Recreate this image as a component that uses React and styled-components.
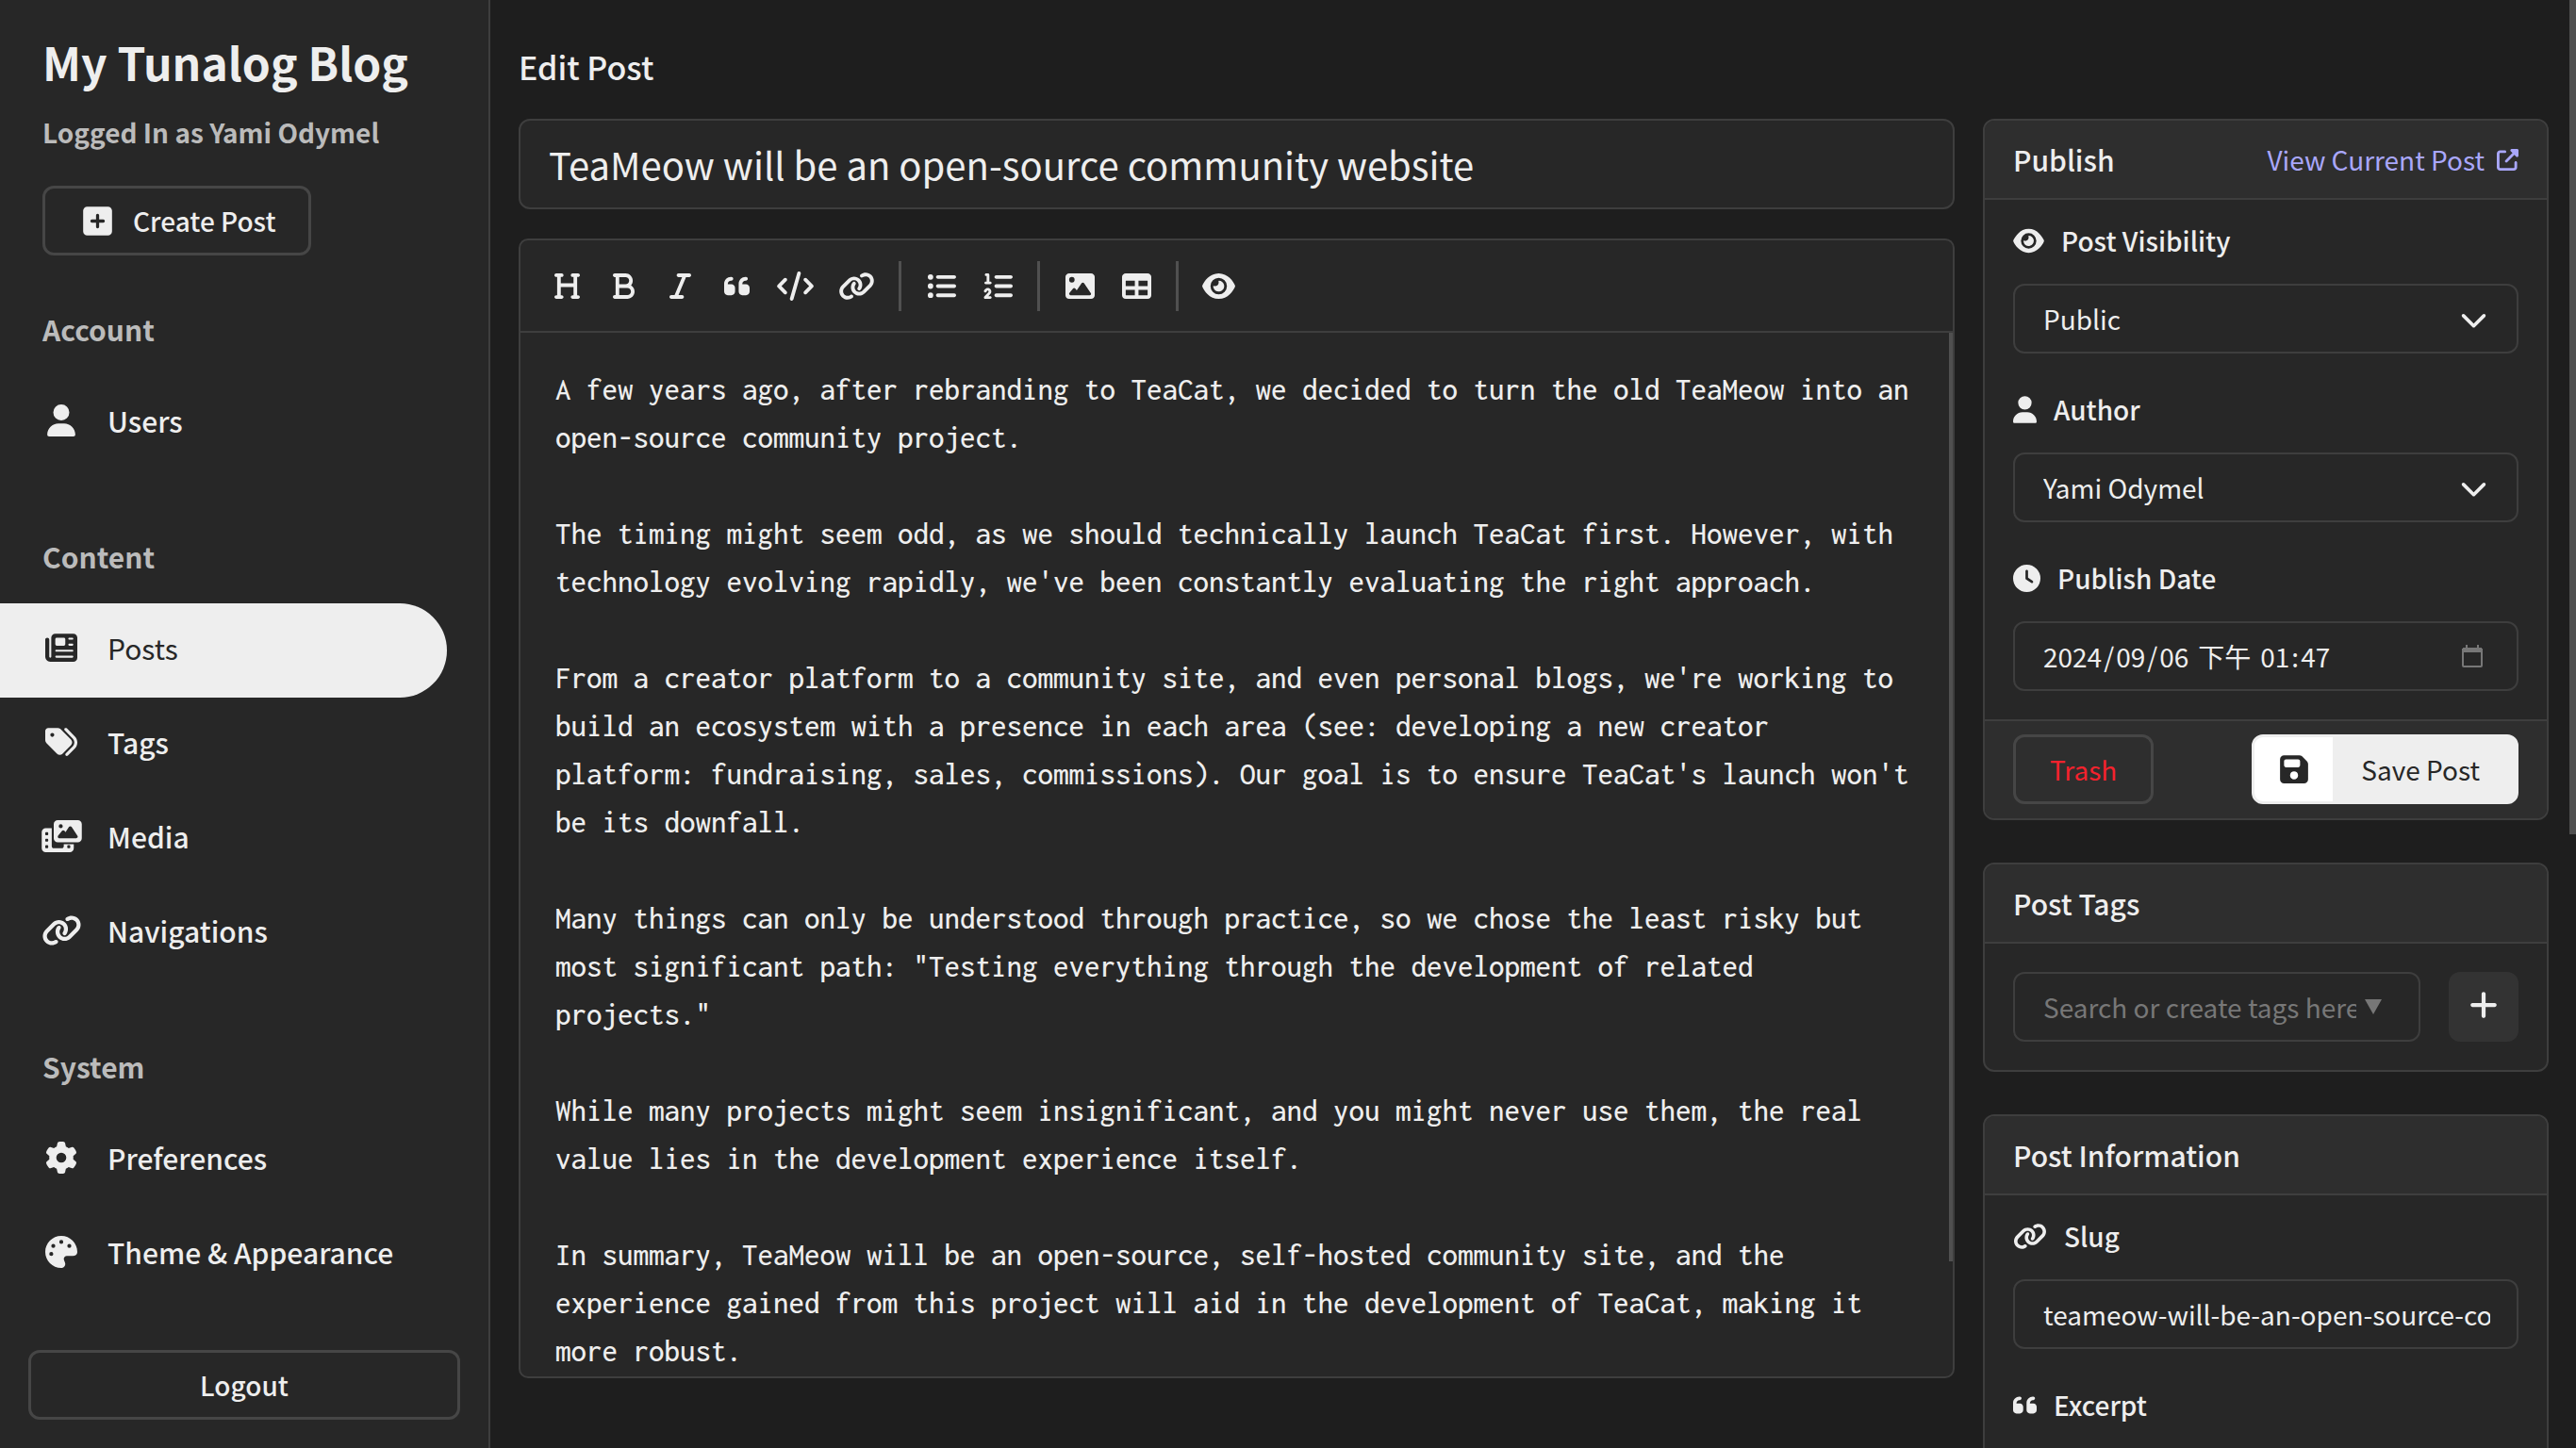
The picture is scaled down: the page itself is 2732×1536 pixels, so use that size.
import React, { useState } from "react";
import styled, { createGlobalStyle, css } from "styled-components";
import {
  FaBold,
  FaChevronDown,
  FaClock,
  FaCode,
  FaEye,
  FaFloppyDisk,
  FaGear,
  FaHeading,
  FaImage,
  FaItalic,
  FaLink,
  FaListOl,
  FaListUl,
  FaNewspaper,
  FaPalette,
  FaPhotoFilm,
  FaPlus,
  FaQuoteLeft,
  FaSquarePlus,
  FaTable,
  FaTags,
  FaUpRightFromSquare,
  FaUser,
} from "react-icons/fa6";

const color = {
  page: "#1e1e1e",
  panel: "#272727",
  raised: "#2e2e2e",
  border: "#3e3e3e",
  strong: "#464646",
  thumb: "#505050",
  text: "#eeeeee",
  muted: "#bbbbbb",
  faint: "#777777",
  link: "#a9a7fb",
  danger: "#f5222d",
};

const GlobalStyle = createGlobalStyle`
  *, *::before, *::after { box-sizing: border-box; }
  body {
    margin: 0;
    background: ${color.page};
    color: ${color.text};
    font-family: "Noto Sans CJK TC", "Noto Sans", sans-serif;
    font-size: 28px;
    line-height: 40px;
  }
  button, input, select, textarea { font: inherit; color: inherit; }
  h1, h2, h3, p, ul { margin: 0; padding: 0; }
`;

/* ---------- shared ---------- */

const IconFrame = styled.span`
  display: inline-flex;
  flex: none;
  align-items: center;
  justify-content: center;
  width: ${(p) => (p.$slot ? `${p.$slot}px` : "auto")};

  svg {
    flex: none;
    width: ${(p) => Math.round(p.$size * p.$ratio)}px;
    height: ${(p) => p.$size}px;
  }
`;

// Glyphs are drawn on a 512-unit high box of varying width; keep that width.
function Icon({ glyph: Glyph, size, slot, className }) {
  const [, , w, h] = Glyph({}).props.attr.viewBox.split(" ").map(Number);
  return (
    <IconFrame className={className} $size={size} $slot={slot} $ratio={w / h} aria-hidden="true">
      <Glyph />
    </IconFrame>
  );
}

const field = css`
  width: 100%;
  height: 74px;
  border: 2px solid ${color.border};
  border-radius: 12px;
  background: ${color.panel};
`;

const OutlineButton = styled.button`
  display: flex;
  align-items: center;
  justify-content: center;
  gap: 22px;
  height: 74px;
  padding: ${(p) => (p.$leadingIcon ? "0 34px 0 40px" : "0 36px")};
  border: 3px solid ${color.strong};
  border-radius: 12px;
  background: transparent;
  color: ${(p) => (p.$danger ? color.danger : color.text)};
  font-weight: ${(p) => (p.$danger ? 400 : 500)};
  cursor: pointer;
`;

/* ---------- sidebar ---------- */

const Shell = styled.div`
  display: flex;
  height: 100vh;
  overflow: hidden;
`;

const Sidebar = styled.aside`
  display: flex;
  flex: none;
  flex-direction: column;
  width: 520px;
  padding: 33px 0 30px;
  border-right: 2px solid ${color.border};
  background: ${color.panel};
`;

const Brand = styled.header`
  display: flex;
  flex-direction: column;
  align-items: flex-start;
  padding: 0 45px;
`;

const BlogName = styled.h1`
  font-size: 48px;
  font-weight: 700;
  line-height: 64px;
`;

const LoggedIn = styled.p`
  margin: 23px 0 37px;
  color: ${color.muted};
  font-weight: 700;
`;

const Nav = styled.nav`
  display: flex;
  flex-direction: column;
  gap: 69px;
  margin-top: 56px;
`;

const GroupTitle = styled.h2`
  margin-bottom: 28px;
  padding: 0 45px;
  color: ${color.muted};
  font-size: 30px;
  font-weight: 700;
  line-height: 44px;
`;

const NavList = styled.ul`
  list-style: none;
`;

const NavLink = styled.a`
  display: flex;
  align-items: center;
  gap: 29px;
  height: 100px;
  margin-right: 44px;
  padding: 0 0 7px 45px;
  border-radius: 0 50px 50px 0;
  background: ${(p) => (p.$active ? color.text : "transparent")};
  color: ${(p) => (p.$active ? color.panel : color.text)};
  font-size: 30px;
  font-weight: ${(p) => (p.$active ? 400 : 500)};
  text-decoration: none;
`;

const SidebarFooter = styled.div`
  display: grid;
  margin-top: auto;
  padding: 0 30px;
`;

/* ---------- main ---------- */

const Main = styled.main`
  flex: 1;
  min-width: 0;
  padding: 47px 29px 0 30px;
  overflow-y: auto;
  scrollbar-width: none;
`;

const PageTitle = styled.h1`
  margin-bottom: 31px;
  font-size: 34px;
  font-weight: 500;
  line-height: 48px;
`;

const Columns = styled.div`
  display: grid;
  grid-template-columns: minmax(0, 1fr) 600px;
  align-items: start;
  gap: 30px;
`;

const Compose = styled.div`
  display: flex;
  flex-direction: column;
  gap: 31px;
`;

const TitleInput = styled.input`
  ${field}
  height: 96px;
  padding: 0 30px;
  font-size: 40px;
`;

const Editor = styled.section`
  display: flex;
  flex-direction: column;
  height: calc(100vh - 327px);
  min-height: 600px;
  border: 2px solid ${color.border};
  border-radius: 10px;
  background: ${color.panel};
  overflow: hidden;
`;

const Toolbar = styled.div`
  display: flex;
  flex: none;
  align-items: center;
  height: 98px;
  padding: 0 19px;
  border-bottom: 2px solid ${color.border};
`;

const Tool = styled.button`
  display: flex;
  align-items: center;
  justify-content: center;
  min-width: 60px;
  height: 60px;
  padding: 0 13px;
  border: 0;
  background: transparent;
  cursor: pointer;
`;

const ToolDivider = styled.span`
  width: 3px;
  height: 53px;
  margin: 0 12px;
  background: ${color.thumb};
`;

const EditorBody = styled.div`
  position: relative;
  display: flex;
  flex: 1;
  min-height: 0;
`;

const Content = styled.textarea`
  flex: 1;
  padding: 35px 36px 0 37px;
  border: 0;
  outline: 0;
  background: transparent;
  font-family: Inconsolata, "DejaVu Sans Mono", monospace;
  font-size: 33px;
  font-weight: 500;
  line-height: 51px;
  resize: none;
  scrollbar-width: none;
`;

const EditorThumb = styled.span`
  position: absolute;
  top: 0;
  right: 0;
  width: 4px;
  height: 89%;
  background: ${color.thumb};
`;

const PageThumb = styled.span`
  position: fixed;
  top: 0;
  right: 0;
  width: 7px;
  height: 57.6vh;
  background: ${color.thumb};
`;

/* ---------- side cards ---------- */

const Cards = styled.div`
  display: flex;
  flex-direction: column;
  gap: 45px;
`;

const Card = styled.section`
  border: 2px solid ${color.border};
  border-radius: 12px;
  background: ${color.panel};
  overflow: hidden;
`;

const CardHeader = styled.header`
  display: flex;
  align-items: center;
  justify-content: space-between;
  height: 84px;
  padding: 0 30px;
  border-bottom: 2px solid ${color.border};
  background: ${color.raised};
`;

const CardTitle = styled.h2`
  font-size: 30px;
  font-weight: 500;
  line-height: 44px;
`;

const CardLink = styled.a`
  display: flex;
  align-items: center;
  gap: 13px;
  color: ${color.link};
  text-decoration: none;
`;

const CardBody = styled.div`
  display: flex;
  flex-direction: column;
  gap: 39px;
  padding: ${(p) => (p.$plain ? "30px" : "23px 30px 30px")};
`;

const CardFooter = styled.footer`
  display: flex;
  justify-content: space-between;
  padding: 14px 30px 15px;
  border-top: 2px solid ${color.border};
  background: ${color.raised};
`;

const Field = styled.div`
  display: flex;
  flex-direction: column;
  gap: 26px;
`;

const FieldLabel = styled.label`
  display: flex;
  align-items: center;
  gap: 18px;
  font-weight: 500;
`;

const SelectBox = styled.div`
  display: grid;
  align-items: center;

  > * {
    grid-area: 1 / 1;
  }
`;

const Select = styled.select`
  ${field}
  padding: 0 80px 0 30px;
  appearance: none;
`;

const SelectArrow = styled(Icon)`
  justify-self: end;
  margin-right: 33px;
  pointer-events: none;
`;

const TextInput = styled.input`
  ${field}
  padding: 0 28px 0 30px;
`;

const ExcerptInput = styled.textarea`
  ${field}
  height: 220px;
  padding: 16px 30px;
  resize: none;
`;

const DateField = styled.div`
  ${field}
  display: flex;
  align-items: center;
  padding: 0 36px 0 28px;
`;

const DatePart = styled.input`
  box-sizing: content-box;
  width: ${(p) => p.$width};
  margin-right: ${(p) => (p.$gap ? "6px" : "0")};
  padding: 0 2px;
  border: 0;
  background: transparent;
`;

const PickerButton = styled.button`
  display: flex;
  margin-left: auto;
  padding: 0;
  border: 0;
  background: transparent;
  color: ${color.faint};
`;

const SaveButton = styled.button`
  display: flex;
  align-items: stretch;
  height: 74px;
  padding: 0;
  border: 3px solid ${color.text};
  border-radius: 12px;
  background: ${color.text};
  color: ${color.panel};
  overflow: hidden;
  cursor: pointer;
`;

const SaveIcon = styled(Icon)`
  background: #ffffff;
`;

const SaveText = styled.span`
  display: flex;
  align-items: center;
  padding: 0 38px 0 30px;
`;

const TagRow = styled.div`
  display: flex;
  gap: 30px;
`;

const TagBox = styled.div`
  ${field}
  display: flex;
  flex: 1;
  align-items: center;
  gap: 9px;
  min-width: 0;
  padding: 0 39px 0 30px;
  color: ${color.faint};
`;

const TagInput = styled.input`
  flex: 1;
  min-width: 0;
  padding: 0;
  border: 0;
  background: transparent;

  &::placeholder {
    color: ${color.faint};
    opacity: 1;
  }
`;

const AddButton = styled.button`
  display: flex;
  flex: none;
  align-items: center;
  justify-content: center;
  width: 74px;
  height: 74px;
  padding: 0 0 4px;
  border: 0;
  border-radius: 12px;
  background: #333333;
  cursor: pointer;
`;

/* ---------- data ---------- */

const NAV = [
  { title: "Account", items: [["Users", FaUser]] },
  {
    title: "Content",
    items: [
      ["Posts", FaNewspaper],
      ["Tags", FaTags],
      ["Media", FaPhotoFilm],
      ["Navigations", FaLink],
    ],
  },
  {
    title: "System",
    items: [
      ["Preferences", FaGear],
      ["Theme & Appearance", FaPalette],
    ],
  },
];

const TOOLS = [
  [
    ["Heading", FaHeading],
    ["Bold", FaBold],
    ["Italic", FaItalic],
    ["Quote", FaQuoteLeft],
    ["Code", FaCode],
    ["Link", FaLink],
  ],
  [
    ["Bulleted list", FaListUl],
    ["Numbered list", FaListOl],
  ],
  [
    ["Image", FaImage],
    ["Table", FaTable],
  ],
  [["Preview", FaEye]],
];

const BODY = [
  "A few years ago, after rebranding to TeaCat, we decided to turn the old TeaMeow into an open-source community project.",
  "The timing might seem odd, as we should technically launch TeaCat first. However, with technology evolving rapidly, we've been constantly evaluating the right approach.",
  "From a creator platform to a community site, and even personal blogs, we're working to build an ecosystem with a presence in each area (see: developing a new creator platform: fundraising, sales, commissions). Our goal is to ensure TeaCat's launch won't be its downfall.",
  'Many things can only be understood through practice, so we chose the least risky but most significant path: "Testing everything through the development of related projects."',
  "While many projects might seem insignificant, and you might never use them, the real value lies in the development experience itself.",
  "In summary, TeaMeow will be an open-source, self-hosted community site, and the experience gained from this project will aid in the development of TeaCat, making it more robust.",
].join("\n\n");

/* ---------- pieces ---------- */

function LabelledField({ id, icon, label, children }) {
  return (
    <Field>
      <FieldLabel htmlFor={id}>
        <Icon glyph={icon} size={29} />
        {label}
      </FieldLabel>
      {children}
    </Field>
  );
}

function Dropdown({ id, value }) {
  return (
    <SelectBox>
      <Select id={id} defaultValue={value}>
        <option>{value}</option>
      </Select>
      <SelectArrow glyph={FaChevronDown} size={29} />
    </SelectBox>
  );
}

function CalendarIcon() {
  return (
    <svg width="22" height="24" viewBox="0 0 22 24" fill="none" aria-hidden="true">
      <path d="M1 5h20v17a1 1 0 0 1-1 1H2a1 1 0 0 1-1-1z" stroke="currentColor" strokeWidth="2" />
      <path d="M1 3h20v5H1zM4 0h2v4H4zM16 0h2v4h-2z" fill="currentColor" />
    </svg>
  );
}

function PublishDate() {
  return (
    <DateField role="group" aria-label="Publish Date">
      <DatePart id="publish-date" aria-label="Year" defaultValue="2024" $width="4ch" />/
      <DatePart aria-label="Month" defaultValue="09" $width="2ch" />/
      <DatePart aria-label="Day" defaultValue="06" $width="2ch" $gap />
      <DatePart aria-label="AM/PM" defaultValue="下午" $width="2em" $gap />
      <DatePart aria-label="Hour" defaultValue="01" $width="2ch" />:
      <DatePart aria-label="Minute" defaultValue="47" $width="2ch" />
      <PickerButton type="button" aria-label="Open calendar">
        <CalendarIcon />
      </PickerButton>
    </DateField>
  );
}

export default function App() {
  const [title, setTitle] = useState("TeaMeow will be an open-source community website");
  const [body, setBody] = useState(BODY);

  return (
    <>
      <GlobalStyle />
      <Shell>
        <Sidebar>
          <Brand>
            <BlogName>My Tunalog Blog</BlogName>
            <LoggedIn>Logged In as Yami Odymel</LoggedIn>
            <OutlineButton type="button" $leadingIcon>
              <Icon glyph={FaSquarePlus} size={35} />
              Create Post
            </OutlineButton>
          </Brand>
          <Nav>
            {NAV.map((group) => (
              <div key={group.title}>
                <GroupTitle>{group.title}</GroupTitle>
                <NavList>
                  {group.items.map(([name, glyph]) => (
                    <li key={name}>
                      <NavLink href="#" $active={name === "Posts"}>
                        <Icon glyph={glyph} size={34} slot={40} />
                        {name}
                      </NavLink>
                    </li>
                  ))}
                </NavList>
              </div>
            ))}
          </Nav>
          <SidebarFooter>
            <OutlineButton type="button">Logout</OutlineButton>
          </SidebarFooter>
        </Sidebar>

        <Main>
          <PageTitle>Edit Post</PageTitle>
          <Columns>
            <Compose>
              <TitleInput aria-label="Post title" value={title} onChange={(e) => setTitle(e.target.value)} />
              <Editor>
                <Toolbar role="toolbar" aria-label="Formatting">
                  {TOOLS.map((group, i) => (
                    <React.Fragment key={i}>
                      {i > 0 && <ToolDivider />}
                      {group.map(([name, glyph]) => (
                        <Tool key={name} type="button" aria-label={name}>
                          <Icon glyph={glyph} size={31} />
                        </Tool>
                      ))}
                    </React.Fragment>
                  ))}
                </Toolbar>
                <EditorBody>
                  <Content
                    aria-label="Post content"
                    spellCheck={false}
                    value={body}
                    onChange={(e) => setBody(e.target.value)}
                  />
                  <EditorThumb />
                </EditorBody>
              </Editor>
            </Compose>

            <Cards>
              <Card>
                <CardHeader>
                  <CardTitle>Publish</CardTitle>
                  <CardLink href="#">
                    View Current Post
                    <Icon glyph={FaUpRightFromSquare} size={23} />
                  </CardLink>
                </CardHeader>
                <CardBody>
                  <LabelledField id="visibility" icon={FaEye} label="Post Visibility">
                    <Dropdown id="visibility" value="Public" />
                  </LabelledField>
                  <LabelledField id="author" icon={FaUser} label="Author">
                    <Dropdown id="author" value="Yami Odymel" />
                  </LabelledField>
                  <LabelledField id="publish-date" icon={FaClock} label="Publish Date">
                    <PublishDate />
                  </LabelledField>
                </CardBody>
                <CardFooter>
                  <OutlineButton type="button" $danger>
                    Trash
                  </OutlineButton>
                  <SaveButton type="button">
                    <SaveIcon glyph={FaFloppyDisk} size={34} slot={83} />
                    <SaveText>Save Post</SaveText>
                  </SaveButton>
                </CardFooter>
              </Card>

              <Card>
                <CardHeader>
                  <CardTitle>Post Tags</CardTitle>
                </CardHeader>
                <CardBody $plain>
                  <TagRow>
                    <TagBox>
                      <TagInput aria-label="Post tags" placeholder="Search or create tags here..." />
                      <svg width="18" height="16" viewBox="0 0 18 16" aria-hidden="true">
                        <path d="M0 0h18L9 16z" fill="currentColor" />
                      </svg>
                    </TagBox>
                    <AddButton type="button" aria-label="Add tag">
                      <Icon glyph={FaPlus} size={34} />
                    </AddButton>
                  </TagRow>
                </CardBody>
              </Card>

              <Card>
                <CardHeader>
                  <CardTitle>Post Information</CardTitle>
                </CardHeader>
                <CardBody>
                  <LabelledField id="slug" icon={FaLink} label="Slug">
                    <TextInput id="slug" defaultValue="teameow-will-be-an-open-source-community-website" />
                  </LabelledField>
                  <LabelledField id="excerpt" icon={FaQuoteLeft} label="Excerpt">
                    <ExcerptInput id="excerpt" />
                  </LabelledField>
                </CardBody>
              </Card>
            </Cards>
          </Columns>
        </Main>
        <PageThumb />
      </Shell>
    </>
  );
}
